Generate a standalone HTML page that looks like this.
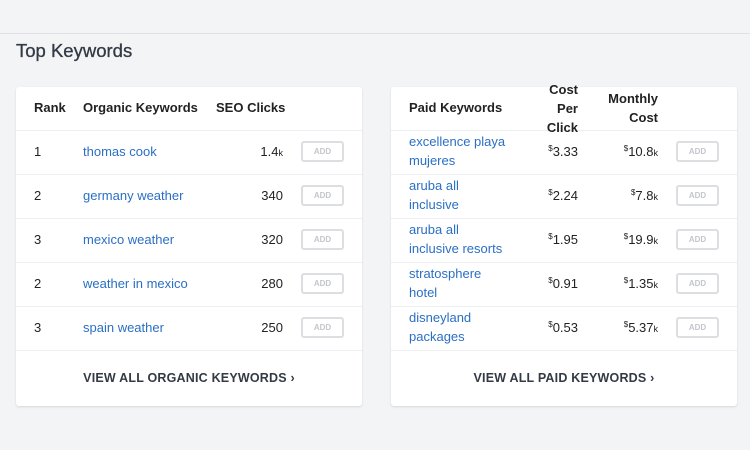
<!DOCTYPE html>
<html><head><style>
*{margin:0;padding:0;box-sizing:border-box}
body{width:750px;height:450px;background:#f3f4f6;font-family:"Liberation Sans",sans-serif;position:relative;overflow:hidden;color:#222}
.topline{position:absolute;left:0;top:33px;width:750px;height:1px;background:#dfe1e5}
h1{position:absolute;left:16px;top:40px;font-size:18.5px;font-weight:normal;color:#333a45;-webkit-text-stroke:0.3px #333a45}
.card{position:absolute;top:87px;width:346px;height:319px;background:#fff;border-radius:3px;box-shadow:0 1px 2px rgba(0,0,0,.12)}
.a{position:absolute;font-size:13px;white-space:nowrap;z-index:2}
.h{font-weight:bold;color:#222}
.link{color:#2a6fc4;line-height:19px}
.sep{position:absolute;left:0;width:346px;height:1px;background:#eceef0;z-index:1}
.btn{position:absolute;width:43px;height:21px;border:2px solid #dcdee2;border-radius:3px;font-size:8px;color:#c3c6cb;text-align:center;line-height:17px;font-weight:bold}
.r{text-align:right}
.foot{position:absolute;left:0;width:346px;top:284px;text-align:center;font-size:12.5px;font-weight:bold;color:#333a45;letter-spacing:.2px}
sup{font-size:8px;vertical-align:5px}
small{font-size:9px}
</style></head><body>
<div class="topline"></div>
<h1>Top Keywords</h1>

<div class="card" style="left:16px">
<div class="a h" style="left:18px;top:13px">Rank</div>
<div class="a h" style="left:67px;top:13px">Organic Keywords</div>
<div class="a h" style="left:200px;top:13px">SEO Clicks</div>
<div class="sep" style="top:43px"></div>
<div class="a" style="left:18px;top:57px">1</div><div class="a link" style="left:67px;top:55px">thomas cook</div><div class="a r" style="right:79px;top:57px">1.4<small>k</small></div><div class="btn" style="left:285px;top:54px">ADD</div>
<div class="sep" style="top:87px"></div>
<div class="a" style="left:18px;top:101px">2</div><div class="a link" style="left:67px;top:99px">germany weather</div><div class="a r" style="right:79px;top:101px">340</div><div class="btn" style="left:285px;top:98px">ADD</div>
<div class="sep" style="top:131px"></div>
<div class="a" style="left:18px;top:145px">3</div><div class="a link" style="left:67px;top:143px">mexico weather</div><div class="a r" style="right:79px;top:145px">320</div><div class="btn" style="left:285px;top:142px">ADD</div>
<div class="sep" style="top:175px"></div>
<div class="a" style="left:18px;top:189px">2</div><div class="a link" style="left:67px;top:187px">weather in mexico</div><div class="a r" style="right:79px;top:189px">280</div><div class="btn" style="left:285px;top:186px">ADD</div>
<div class="sep" style="top:219px"></div>
<div class="a" style="left:18px;top:233px">3</div><div class="a link" style="left:67px;top:231px">spain weather</div><div class="a r" style="right:79px;top:233px">250</div><div class="btn" style="left:285px;top:230px">ADD</div>
<div class="sep" style="top:263px"></div>
<div class="foot">VIEW ALL ORGANIC KEYWORDS ›</div>
</div>

<div class="card" style="left:391px">
<div class="a h" style="left:18px;top:13px">Paid Keywords</div>
<div class="a h r" style="right:159px;top:-7px;line-height:19px">Cost<br>Per<br>Click</div>
<div class="a h r" style="right:79px;top:2px;line-height:19px">Monthly<br>Cost</div>
<div class="sep" style="top:43px"></div>
<div class="a link" style="left:18px;top:45px">excellence playa<br>mujeres</div><div class="a r" style="right:159px;top:57px"><sup>$</sup>3.33</div><div class="a r" style="right:79px;top:57px"><sup>$</sup>10.8<small>k</small></div><div class="btn" style="left:285px;top:54px">ADD</div>
<div class="sep" style="top:87px"></div>
<div class="a link" style="left:18px;top:89px">aruba all<br>inclusive</div><div class="a r" style="right:159px;top:101px"><sup>$</sup>2.24</div><div class="a r" style="right:79px;top:101px"><sup>$</sup>7.8<small>k</small></div><div class="btn" style="left:285px;top:98px">ADD</div>
<div class="sep" style="top:131px"></div>
<div class="a link" style="left:18px;top:133px">aruba all<br>inclusive resorts</div><div class="a r" style="right:159px;top:145px"><sup>$</sup>1.95</div><div class="a r" style="right:79px;top:145px"><sup>$</sup>19.9<small>k</small></div><div class="btn" style="left:285px;top:142px">ADD</div>
<div class="sep" style="top:175px"></div>
<div class="a link" style="left:18px;top:177px">stratosphere<br>hotel</div><div class="a r" style="right:159px;top:189px"><sup>$</sup>0.91</div><div class="a r" style="right:79px;top:189px"><sup>$</sup>1.35<small>k</small></div><div class="btn" style="left:285px;top:186px">ADD</div>
<div class="sep" style="top:219px"></div>
<div class="a link" style="left:18px;top:221px">disneyland<br>packages</div><div class="a r" style="right:159px;top:233px"><sup>$</sup>0.53</div><div class="a r" style="right:79px;top:233px"><sup>$</sup>5.37<small>k</small></div><div class="btn" style="left:285px;top:230px">ADD</div>
<div class="sep" style="top:263px"></div>
<div class="foot">VIEW ALL PAID KEYWORDS ›</div>
</div>
</body></html>
